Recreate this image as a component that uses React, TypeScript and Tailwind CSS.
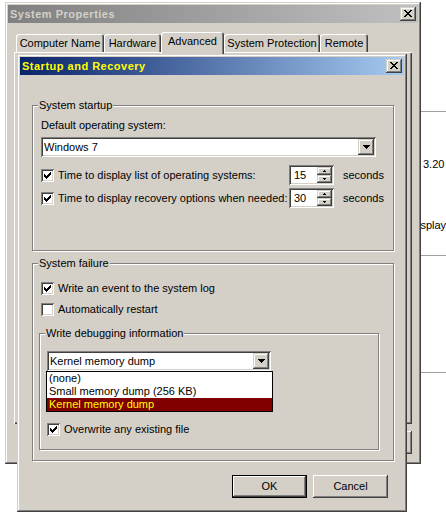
import React from 'react'

// classic 3D edges
const WINDOW_EDGE =
  'shadow-[inset_-1px_-1px_#404040,inset_1px_1px_#d4d0c8,inset_-2px_-2px_#808080,inset_2px_2px_#ffffff]'
const BUTTON_EDGE = 'shadow-[inset_-1px_-1px_#404040,inset_1px_1px_#ffffff,inset_-2px_-2px_#808080]'
const DEFAULT_BUTTON_EDGE =
  'shadow-[inset_0_0_0_1px_#000000,inset_-2px_-2px_#404040,inset_2px_2px_#ffffff,inset_-3px_-3px_#808080]'
const SUNKEN_EDGE =
  'shadow-[inset_1px_1px_#808080,inset_-1px_-1px_#ffffff,inset_2px_2px_#404040,inset_-2px_-2px_#d4d0c8]'
const PANEL_EDGE = 'shadow-[inset_1px_1px_#ffffff,inset_-1px_-1px_#404040,inset_-2px_-2px_#808080]'
const GROUP_EDGE = 'border border-[#808080] shadow-[1px_1px_#ffffff,inset_1px_1px_#ffffff]'

const CloseGlyph = () => (
  <svg width="8" height="7" shapeRendering="crispEdges" className="-mt-px">
    <rect x="0" y="0" width="2" height="1" />
    <rect x="6" y="0" width="2" height="1" />
    <rect x="1" y="1" width="2" height="1" />
    <rect x="5" y="1" width="2" height="1" />
    <rect x="2" y="2" width="4" height="1" />
    <rect x="3" y="3" width="2" height="1" />
    <rect x="2" y="4" width="4" height="1" />
    <rect x="1" y="5" width="2" height="1" />
    <rect x="5" y="5" width="2" height="1" />
    <rect x="0" y="6" width="2" height="1" />
    <rect x="6" y="6" width="2" height="1" />
  </svg>
)

const CheckMark = () => (
  <svg width="7" height="7" shapeRendering="crispEdges">
    <rect x="0" y="2" width="1" height="3" />
    <rect x="1" y="3" width="1" height="3" />
    <rect x="2" y="4" width="1" height="3" />
    <rect x="3" y="3" width="1" height="3" />
    <rect x="4" y="2" width="1" height="3" />
    <rect x="5" y="1" width="1" height="3" />
    <rect x="6" y="0" width="1" height="3" />
  </svg>
)

const ArrowDown = () => (
  <svg width="7" height="4" shapeRendering="crispEdges">
    <rect x="0" y="0" width="7" height="1" />
    <rect x="1" y="1" width="5" height="1" />
    <rect x="2" y="2" width="3" height="1" />
    <rect x="3" y="3" width="1" height="1" />
  </svg>
)

const SpinArrow = ({ up }: { up?: boolean }) => (
  <svg width="3" height="2" shapeRendering="crispEdges">
    {up ? (
      <>
        <rect x="1" y="0" width="1" height="1" />
        <rect x="0" y="1" width="3" height="1" />
      </>
    ) : (
      <>
        <rect x="0" y="0" width="3" height="1" />
        <rect x="1" y="1" width="1" height="1" />
      </>
    )}
  </svg>
)

function CloseBox() {
  return (
    <div className={`flex h-[14px] w-[16px] items-center justify-center bg-[#d4d0c8] ${WINDOW_EDGE}`}>
      <CloseGlyph />
    </div>
  )
}

function TitleBar({ title, active }: { title: string; active?: boolean }) {
  return (
    <div
      className={`flex h-[18px] shrink-0 items-center justify-between px-[2px] ${
        active
          ? 'bg-[linear-gradient(to_right,#0a246a,#a6caf0)]'
          : 'bg-[linear-gradient(to_right,#808080,#c0c0c0)]'
      }`}
    >
      <span className={`font-bold tracking-[0.5px] ${active ? 'text-[#ffff00]' : 'text-[#d4d0c8]'}`}>{title}</span>
      <CloseBox />
    </div>
  )
}

function Tab({ label, className, selected }: { label: string; className: string; selected?: boolean }) {
  return (
    <div
      className={`${className} ${
        selected ? 'relative z-10 -mb-[2px] h-[22px]' : 'h-[18px]'
      } rounded-t-[3px] bg-[#d4d0c8] pt-[3px] text-center shadow-[inset_1px_1px_#ffffff,inset_-1px_0_#404040,inset_-2px_0_#808080]`}
    >
      {label}
    </div>
  )
}

function PushButton({ children, isDefault }: { children: React.ReactNode; isDefault?: boolean }) {
  return (
    <div
      className={`flex h-[23px] w-[75px] items-center justify-center bg-[#d4d0c8] ${
        isDefault ? DEFAULT_BUTTON_EDGE : BUTTON_EDGE
      }`}
    >
      {children}
    </div>
  )
}

function CheckBox({ checked }: { checked?: boolean }) {
  return (
    <div className={`flex h-[13px] w-[13px] shrink-0 items-center justify-center bg-white ${SUNKEN_EDGE}`}>
      {checked && <CheckMark />}
    </div>
  )
}

function CheckRow({ label, checked, className = '' }: { label: string; checked?: boolean; className?: string }) {
  return (
    <div className={`flex h-[13px] items-center gap-[4px] ${className}`}>
      <CheckBox checked={checked} />
      <span>{label}</span>
    </div>
  )
}

function Combo({ value, className }: { value: string; className: string }) {
  return (
    <div className={`flex h-[20px] items-center bg-white p-[2px] ${SUNKEN_EDGE} ${className}`}>
      <span className="flex-1 pl-[1px]">{value}</span>
      <div className={`flex h-[16px] w-[16px] items-center justify-center bg-[#d4d0c8] ${WINDOW_EDGE}`}>
        <ArrowDown />
      </div>
    </div>
  )
}

function Spin({ value }: { value: string }) {
  return (
    <div className={`flex h-[20px] w-[45px] bg-white p-[2px] ${SUNKEN_EDGE}`}>
      <span className="flex-1 pl-[3px] leading-[16px]">{value}</span>
      <div className="flex w-[15px] flex-col">
        <div className={`flex h-[8px] items-center justify-center bg-[#d4d0c8] ${WINDOW_EDGE}`}>
          <SpinArrow up />
        </div>
        <div className={`flex h-[8px] items-center justify-center bg-[#d4d0c8] ${WINDOW_EDGE}`}>
          <SpinArrow />
        </div>
      </div>
    </div>
  )
}

function TimeRow({ label, value, className }: { label: string; value: string; className: string }) {
  return (
    <div className={`flex h-[20px] items-center ${className}`}>
      <div className="flex w-[248px] items-center gap-[4px]">
        <CheckBox checked />
        <span>{label}</span>
      </div>
      <Spin value={value} />
      <span className="ml-[9px]">seconds</span>
    </div>
  )
}

function Group({ legend, className, children }: { legend: string; className: string; children: React.ReactNode }) {
  return (
    <div className={`relative ${GROUP_EDGE} ${className}`}>
      <span className="absolute -top-[7px] left-[5px] bg-[#d4d0c8] px-[1px]">{legend}</span>
      {children}
    </div>
  )
}

// window peeking out behind on the right
function BackdropWindow() {
  return (
    <div className="absolute left-[400px] top-0 flex h-[529px] w-[46px] flex-col bg-white">
      <div className="mt-[111px] h-px bg-[#a0a0a0]" />
      <span className="mt-[46px] pl-[23px]">3.20</span>
      <span className="mt-[48px] pl-[10px]">Display</span>
      <div className="mt-[23px] h-px bg-[#a0a0a0]" />
      <div className="mt-[116px] h-px bg-[#a0a0a0]" />
    </div>
  )
}

function SystemProperties() {
  return (
    <div
      className={`absolute left-[5px] top-[2px] flex h-[462px] w-[416px] flex-col bg-[#d4d0c8] p-[3px] ${WINDOW_EDGE}`}
    >
      <TitleBar title="System Properties" />
      <div className="mt-[9px] flex h-[20px] items-end pl-[8px]">
        <Tab label="Computer Name" className="w-[88px]" />
        <Tab label="Hardware" className="w-[57px]" />
        <Tab label="Advanced" className="w-[63px]" selected />
        <Tab label="System Protection" className="w-[96px]" />
        <Tab label="Remote" className="w-[48px]" />
      </div>
      <div className={`mx-[6px] h-[372px] ${PANEL_EDGE}`} />
      <div className="mr-[6px] mt-[7px] flex justify-end gap-[6px]">
        <PushButton isDefault>OK</PushButton>
        <PushButton>Cancel</PushButton>
        <PushButton>Apply</PushButton>
      </div>
    </div>
  )
}

function StartupAndRecovery() {
  return (
    <div
      className={`absolute left-[17px] top-[54px] flex h-[458px] w-[390px] flex-col bg-[#d4d0c8] p-[3px] ${WINDOW_EDGE}`}
    >
      <TitleBar title="Startup and Recovery" active />
      <div className="flex flex-col pl-[12px] pr-[10px]">
        <Group legend="System startup" className="mt-[30px] h-[146px] pl-[8px] pt-[13px]">
          <div>Default operating system:</div>
          <Combo value="Windows 7" className="mt-[5px] w-[335px]" />
          <TimeRow className="mt-[8px]" label="Time to display list of operating systems:" value="15" />
          <TimeRow className="mt-[3px]" label="Time to display recovery options when needed:" value="30" />
        </Group>

        <Group legend="System failure" className="mt-[12px] h-[198px] pl-[8px] pt-[18px]">
          <CheckRow checked label="Write an event to the system log" />
          <CheckRow label="Automatically restart" className="mt-[8px]" />
          <Group
            legend="Write debugging information"
            className="-ml-[2px] mt-[17px] h-[117px] w-[340px] pl-[7px] pt-[17px]"
          >
            <div className="relative w-[224px]">
              <Combo value="Kernel memory dump" className="w-[224px]" />
              {/* open drop-down list, covers the dump file field */}
              <div className="absolute -left-px top-[20px] z-10 w-[227px] border border-black bg-white">
                <div className="h-[13px] pl-[2px]">(none)</div>
                <div className="h-[13px] pl-[2px]">Small memory dump (256 KB)</div>
                <div className="h-[13px] bg-[#800000] pl-[2px] text-[#ffff00]">Kernel memory dump</div>
              </div>
            </div>
            <div className={`ml-[2px] mt-[20px] h-[20px] w-[224px] bg-white ${SUNKEN_EDGE}`} />
            <CheckRow checked label="Overwrite any existing file" className="mt-[12px]" />
          </Group>
        </Group>

        <div className="mr-[6px] mt-[14px] flex justify-end gap-[6px]">
          <PushButton isDefault>OK</PushButton>
          <PushButton>Cancel</PushButton>
        </div>
      </div>
    </div>
  )
}

export default function App() {
  return (
    <div className="relative h-[529px] w-[446px] overflow-hidden whitespace-nowrap bg-white font-['Liberation_Sans',Arial,sans-serif] text-[11px] leading-[13px] text-black">
      <BackdropWindow />
      <SystemProperties />
      <StartupAndRecovery />
    </div>
  )
}
